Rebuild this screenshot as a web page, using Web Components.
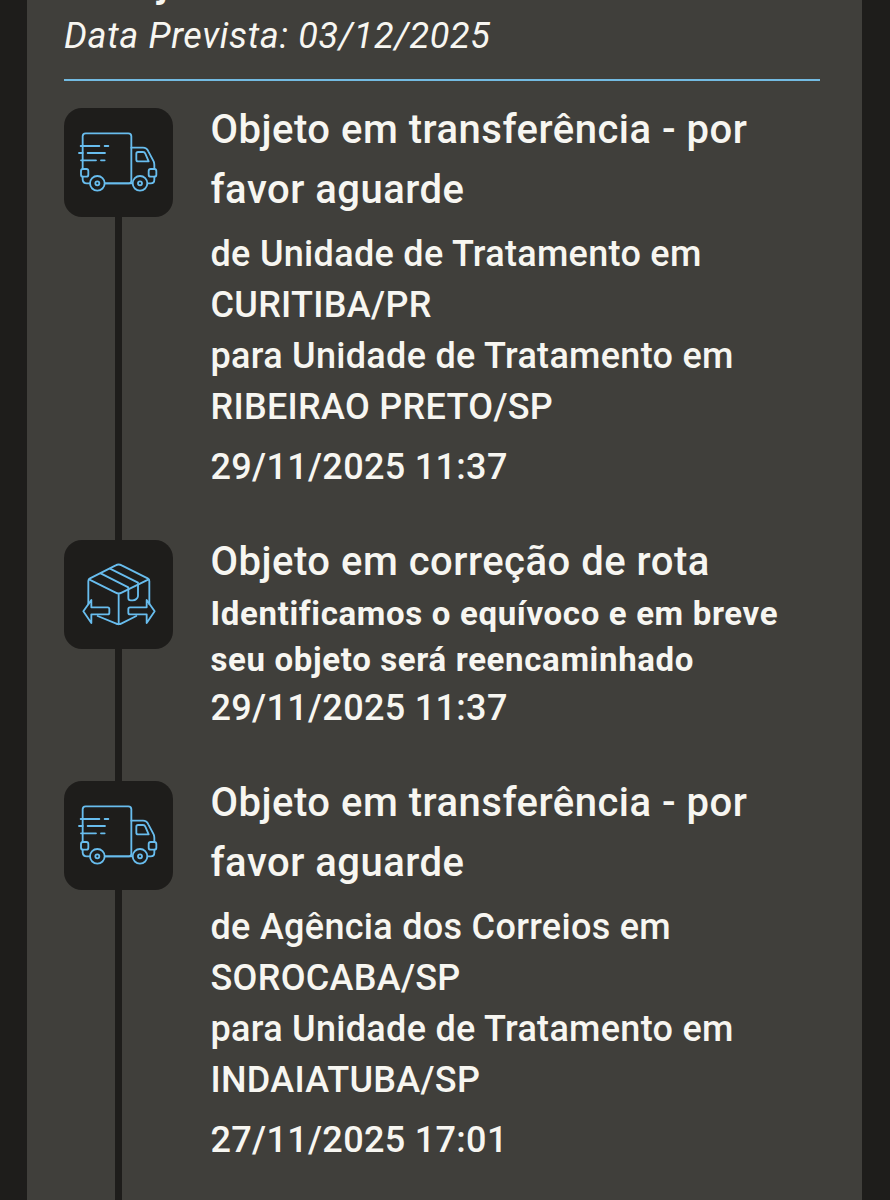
<!DOCTYPE html>
<html lang="pt-BR">
<head>
<meta charset="utf-8">
<meta name="viewport" content="width=device-width, initial-scale=1">
<title>Rastreamento</title>
<style>
  body {
    margin: 0;
    height: 1200px;
    overflow: hidden;
    background: #1e1d1b;
    color: #f7f6f1;
    font-family: Roboto, "Liberation Sans", sans-serif;
  }
</style>
</head>
<body>
<tracking-panel>
  <span slot="service">j</span>
  <span slot="forecast">Data Prevista: 03/12/2025</span>
  <tracking-step icon="truck">
    <span slot="title">Objeto em transferência - por<br>favor aguarde</span>
    <step-route>de Unidade de Tratamento em<br>CURITIBA/PR<br>para Unidade de Tratamento em<br>RIBEIRAO PRETO/SP</step-route>
    <span slot="date">29/11/2025 11:37</span>
  </tracking-step>
  <tracking-step icon="reroute">
    <span slot="title">Objeto em correção de rota</span>
    <step-notice>Identificamos o equívoco e em breve<br>seu objeto será reencaminhado</step-notice>
    <span slot="date">29/11/2025 11:37</span>
  </tracking-step>
  <tracking-step icon="truck">
    <span slot="title">Objeto em transferência - por<br>favor aguarde</span>
    <step-route>de Agência dos Correios em<br>SOROCABA/SP<br>para Unidade de Tratamento em<br>INDAIATUBA/SP</step-route>
    <span slot="date">27/11/2025 17:01</span>
  </tracking-step>
</tracking-panel>

<script>
class TrackingPanel extends HTMLElement {
  connectedCallback() {
    this.attachShadow({ mode: 'open' });
    this.shadowRoot.innerHTML = `
      <style>
        :host {
          display: flex;
          flex-direction: column;
          box-sizing: border-box;
          height: 1200px;
          margin: 0 28px 0 27px;
          padding: 0 42px 0 37px;
          background: #403f3b;
          overflow: hidden;
        }
        header {
          display: flex;
          flex-direction: column;
          flex: none;
          height: 81px;
          justify-content: flex-end;
          box-sizing: border-box;
          padding-bottom: 17px;
          border-bottom: 2px solid #73bbe2;
          margin-bottom: 27px;
          white-space: nowrap;
        }
        .service {
          padding-left: 94px;
          font-size: 36px;
          font-weight: 700;
          line-height: 51px;
        }
        .forecast {
          font-size: 36px;
          font-style: italic;
          line-height: 51px;
          letter-spacing: 0.66px;
        }
      </style>
      <header>
        <div class="service"><slot name="service"></slot></div>
        <div class="forecast"><slot name="forecast"></slot></div>
      </header>
      <slot></slot>
    `;
  }
}
customElements.define('tracking-panel', TrackingPanel);

class TrackingStep extends HTMLElement {
  connectedCallback() {
    const icon = this.getAttribute('icon');
    this.attachShadow({ mode: 'open' });
    this.shadowRoot.innerHTML = `
      <style>
        :host {
          display: flex;
          flex: none;
          gap: 37.5px;
        }
        .rail {
          display: flex;
          flex-direction: column;
          align-items: center;
          width: 109px;
        }
        .line {
          flex: 1;
          width: 7px;
          background: #1e1d1b;
        }
        .content {
          flex: 1;
          padding-bottom: 46.6px;
          white-space: nowrap;
        }
        .title {
          font-size: 40px;
          font-weight: 500;
          line-height: 60px;
          letter-spacing: 0.5px;
          margin-top: -8px;
        }
        .date {
          font-size: 36px;
          font-weight: 500;
          line-height: 51px;
          letter-spacing: 0.32px;
        }
      </style>
      <div class="rail">
        <step-icon name="${icon}"></step-icon>
        <div class="line"></div>
      </div>
      <div class="content">
        <div class="title"><slot name="title"></slot></div>
        <slot></slot>
        <div class="date"><slot name="date"></slot></div>
      </div>
    `;
  }
}
customElements.define('tracking-step', TrackingStep);

class StepRoute extends HTMLElement {
  connectedCallback() {
    this.attachShadow({ mode: 'open' });
    this.shadowRoot.innerHTML = `
      <style>
        :host {
          display: block;
          margin: 9px 0;
          font-size: 36px;
          font-weight: 500;
          line-height: 51px;
          letter-spacing: 0.3px;
        }
      </style>
      <slot></slot>
    `;
  }
}
customElements.define('step-route', StepRoute);

class StepNotice extends HTMLElement {
  connectedCallback() {
    this.attachShadow({ mode: 'open' });
    this.shadowRoot.innerHTML = `
      <style>
        :host {
          display: block;
          margin: -1px 0 -0.5px;
          font-size: 33px;
          font-weight: 700;
          line-height: 46.5px;
          letter-spacing: 0.65px;
        }
      </style>
      <slot></slot>
    `;
  }
}
customElements.define('step-notice', StepNotice);

const ICONS = {
  truck: `
    <rect x="78" y="208" width="22" height="23" rx="6"/>
    <path d="M83 208V110Q83 101 92 101H220Q229 101 229 110V243Q229 251 222 251H150"/>
    <path d="M83 231V240Q84 251 95 251H104M150 251H232"/>
    <path d="M229 144H264Q275 144 280 155L296 185Q298 190 298 196V208M298 231V240Q298 251 287 251H278"/>
    <path d="M249 157H264Q269 157 271 162L281 185H249Q244 185 244 180V162Q244 157 249 157Z"/>
    <rect x="281" y="208" width="23" height="23" rx="6"/>
    <circle cx="127" cy="251" r="22"/><circle cx="127" cy="251" r="6"/>
    <circle cx="255" cy="251" r="22"/><circle cx="255" cy="251" r="6"/>
    <path d="M77 139H133M149 139H160M72 160H83M98 160H150M78 182H123M138 182H149"/>`,
  reroute: `
    <g transform="translate(0 -3)">
      <path d="M100 221V151Q100 146 105 143L182 104Q191 99 200 104L278 143Q283 146 283 151V221"/>
      <path d="M102 146L182 186Q191 191 200 186L281 146M191 190V281"/>
      <path d="M137 128L220 170M165 114L249 156"/>
      <path d="M220 174V202Q220 209 227 209H233Q240 209 244 205Q249 201 249 196V160"/>
      <path d="M128 256L182 278Q191 283 200 278L244 256"/>
      <path d="M85 242L109 208V230H158Q163 230 163 235V246Q163 251 158 251H109V277Z"/>
      <path d="M299 242L275 208V230H225Q220 230 220 235V246Q220 251 225 251H275V277Z"/>
    </g>`
};

class StepIcon extends HTMLElement {
  connectedCallback() {
    this.attachShadow({ mode: 'open' });
    this.shadowRoot.innerHTML = `
      <style>
        :host {
          display: block;
          width: 109px;
          height: 109px;
          border-radius: 18px;
          background: #1e1d1b;
        }
        svg {
          display: block;
          width: 100%;
          height: 100%;
          fill: none;
          stroke: #68bdee;
          stroke-width: 5.5;
          stroke-linecap: round;
          stroke-linejoin: round;
        }
      </style>
      <svg viewBox="27 25 327 327">${ICONS[this.getAttribute('name')]}</svg>
    `;
  }
}
customElements.define('step-icon', StepIcon);
</script>
</body>
</html>
